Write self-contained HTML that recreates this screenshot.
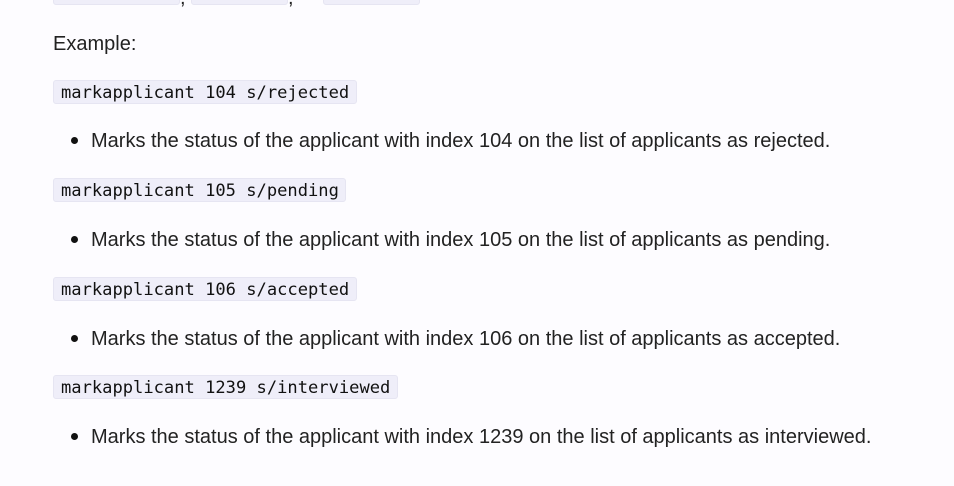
<!DOCTYPE html>
<html><head><meta charset="utf-8"><style>
html,body{margin:0;padding:0;background:#fdfcff;width:954px;height:486px;overflow:hidden;position:relative;font-family:"Liberation Sans",sans-serif;color:#222}
.c{position:absolute;height:24px;background:#efeef9;border:1px solid #e6e5f2;border-radius:3px;font-family:"DejaVu Sans Mono","Liberation Mono",monospace;font-size:17.1px;line-height:24px;padding:0 7px;box-sizing:border-box;color:#111;white-space:pre}
.t{position:absolute;font-size:20px;line-height:24px;white-space:nowrap}
.b{position:absolute;width:7px;height:7px;border-radius:50%;background:#111}
</style></head><body>
<div class="c" style="left:53px;top:-19px;width:127px"></div><div class="t" style="left:180px;top:-14px">,</div>
<div class="c" style="left:191px;top:-19px;width:97px"></div><div class="t" style="left:288px;top:-14px">,</div>
<div class="c" style="left:323px;top:-19px;width:97px"></div>
<div class="t" style="left:53px;top:32px">Example:</div>

<div class="c" style="left:53px;top:80px;width:304px">markapplicant 104 s/rejected</div>
<div class="b" style="left:71px;top:137px"></div>
<div class="t" style="left:91px;top:129px">Marks the status of the applicant with index 104 on the list of applicants as rejected.</div>

<div class="c" style="left:53px;top:178px;width:293px">markapplicant 105 s/pending</div>
<div class="b" style="left:71px;top:236px"></div>
<div class="t" style="left:91px;top:228px">Marks the status of the applicant with index 105 on the list of applicants as pending.</div>

<div class="c" style="left:53px;top:277px;width:304px">markapplicant 106 s/accepted</div>
<div class="b" style="left:71px;top:335px"></div>
<div class="t" style="left:91px;top:327px">Marks the status of the applicant with index 106 on the list of applicants as accepted.</div>

<div class="c" style="left:53px;top:375px;width:345px">markapplicant 1239 s/interviewed</div>
<div class="b" style="left:71px;top:433px"></div>
<div class="t" style="left:91px;top:425px">Marks the status of the applicant with index 1239 on the list of applicants as interviewed.</div>
</body></html>
